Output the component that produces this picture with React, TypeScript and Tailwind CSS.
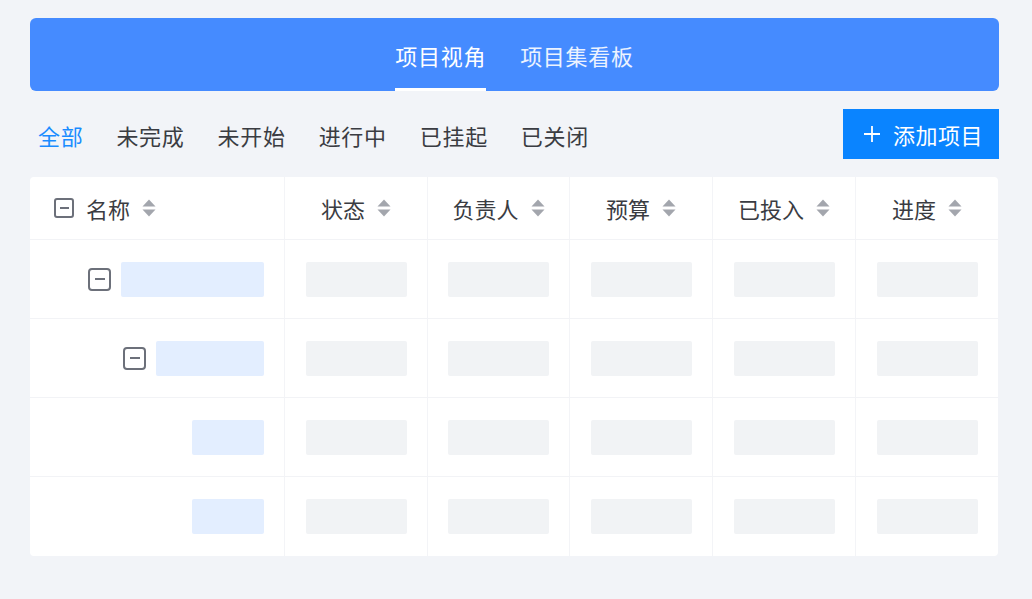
const font = { fontFamily: '"Noto Sans CJK SC", "Noto Sans", sans-serif' };

const filters = ["全部", "未完成", "未开始", "进行中", "已挂起", "已关闭"];
const columns = ["状态", "负责人", "预算", "已投入", "进度"];

// name column: toggle box (if any) + blue skeleton, right aligned
const rows = [
  { box: true, w: "w-[143px]" },
  { box: true, w: "w-[108px]" },
  { box: false, w: "w-[72px]" },
  { box: false, w: "w-[72px]" },
];

function SortIcon() {
  return (
    <svg width="14" height="18" viewBox="0 0 14 18" className="shrink-0">
      <path d="M7 0.5 L13.5 7.5 H0.5 Z" fill="#a3a6ad" />
      <path d="M7 17.5 L13.5 10.5 H0.5 Z" fill="#a3a6ad" />
    </svg>
  );
}

function MinusBox({ size }: { size: "sm" | "md" }) {
  return (
    <span
      className={`flex shrink-0 items-center justify-center border-2 border-[#6c707a] ${
        size === "sm" ? "h-[20px] w-[20px] rounded-[3px]" : "h-[23px] w-[23px] rounded-[4px]"
      }`}
    >
      <span className={`h-[2px] bg-[#6c707a] ${size === "sm" ? "w-[9px]" : "w-[10px]"}`} />
    </span>
  );
}

export default function App() {
  return (
    <div className="h-[599px] w-full bg-[#f2f4f8] pt-[18px]" style={font}>
      <div className="ml-[30px] w-[969px]">
        {/* tabs */}
        <div className="flex h-[73px] justify-center gap-[34px] rounded-md bg-[#458bff] tracking-[0.7px]">
          <div className="flex items-center border-b-[3px] border-white pt-[4px] text-[22px] text-white">
            项目视角
          </div>
          <div className="flex items-center border-b-[3px] border-transparent pt-[4px] text-[22px] text-white/90">
            项目集看板
          </div>
        </div>

        {/* filters */}
        <div className="mt-[18px] flex h-[50px] items-center">
          <div className="flex flex-1 items-center gap-[33px] pl-[8px] pt-[2px] text-[22px] tracking-[0.7px] text-[#3a3c42]">
            {filters.map((f, i) => (
              <span key={f} className={i === 0 ? "text-[#1a8cff]" : ""}>
                {f}
              </span>
            ))}
          </div>
          <button className="flex h-[50px] w-[156px] items-center justify-center gap-[12px] bg-[#0a84ff] pl-[4px] text-[22px] tracking-[0.5px] text-white">
            <svg width="18" height="18" viewBox="0 0 18 18">
              <path d="M9 1 V17 M1 9 H17" stroke="white" strokeWidth="1.8" />
            </svg>
            添加项目
          </button>
        </div>

        {/* table */}
        <div className="mt-[18px] w-[968px] overflow-hidden rounded-[4px] bg-white">
          <div className="grid h-[63px] grid-cols-[255px_143px_142px_143px_143px_142px] border-b border-[#f2f3f6] text-[22px] text-[#3a3c42]">
            <div className="flex items-center gap-[12px] border-r border-[#f3f4f7] pl-[24px]">
              <MinusBox size="sm" />
              <span>名称</span>
              <SortIcon />
            </div>
            {columns.map((c, i) => (
              <div
                key={c}
                className={`flex items-center justify-center gap-[12px] ${
                  i < columns.length - 1 ? "border-r border-[#f3f4f7]" : ""
                }`}
              >
                <span>{c}</span>
                <SortIcon />
              </div>
            ))}
          </div>

          {rows.map((r, ri) => (
            <div
              key={ri}
              className={`grid h-[79px] grid-cols-[255px_143px_142px_143px_143px_142px] ${
                ri < rows.length - 1 ? "border-b border-[#f2f3f6]" : ""
              }`}
            >
              <div className="flex items-center justify-end gap-[10px] border-r border-[#f3f4f7] pr-[20px]">
                {r.box && <MinusBox size="md" />}
                <div className={`h-[35px] rounded-[2px] bg-[#e3eeff] ${r.w}`} />
              </div>
              {columns.map((c, i) => (
                <div
                  key={c}
                  className={`flex items-center justify-center ${
                    i < columns.length - 1 ? "border-r border-[#f3f4f7]" : ""
                  }`}
                >
                  <div className="h-[35px] w-[101px] rounded-[2px] bg-[#f1f3f5]" />
                </div>
              ))}
            </div>
          ))}
        </div>
      </div>
    </div>
  );
}
